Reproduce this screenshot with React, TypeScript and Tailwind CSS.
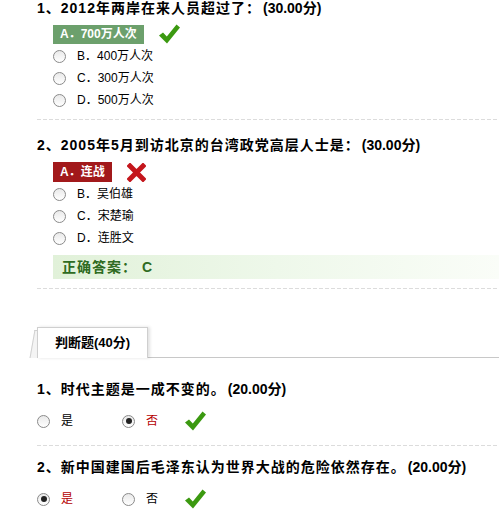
import React from 'react'

const font = { fontFamily: '"Liberation Sans", "Noto Sans CJK SC", sans-serif' }

function Radio({ checked = false }: { checked?: boolean }) {
  return (
    <span className="flex h-[13px] w-[13px] shrink-0 items-center justify-center rounded-full border border-[#8a8a8a] bg-gradient-to-b from-[#e9e9e9] to-white">
      {checked && <span className="h-[6px] w-[6px] rounded-full bg-[#222]" />}
    </span>
  )
}

function Check() {
  return (
    <svg width="21" height="20" viewBox="0 0 21 20" className="shrink-0">
      <path d="M0 11.5 L4 8.5 L7.8 12.5 L17.5 0.5 L21 3.5 L8 19.5 Z" fill="#3b9910" />
    </svg>
  )
}

function Cross() {
  return (
    <svg width="19" height="19" viewBox="0 0 19 19" className="shrink-0">
      <path d="M3 3 L16 16 M16 3 L3 16" stroke="#c4161c" strokeWidth="5" strokeLinecap="square" />
    </svg>
  )
}

function Dashed() {
  return <div className="h-px w-full bg-[repeating-linear-gradient(90deg,#dcdcdc_0_4px,transparent_4px_6px)]" />
}

function Option({ label, text }: { label: string; text: string }) {
  return (
    <div className="flex h-[22px] items-center gap-[11px] text-[12px] text-black">
      <Radio />
      <span>
        {label}．{text}
      </span>
    </div>
  )
}

function Title({ n, text, score }: { n: number; text: string; score: string }) {
  return (
    <div className="h-4 text-[14px] font-bold leading-4 text-black whitespace-nowrap">
      <span className="tracking-[1px]">
        {n}、{text}
      </span>
      <span className="ml-[2px]">({score}分)</span>
    </div>
  )
}

function TfOptions({ pick }: { pick: 'yes' | 'no' }) {
  return (
    <div className="flex h-[22px] items-center text-[12px]">
      <div className="flex w-[85px] items-center gap-[11px]">
        <Radio checked={pick === 'yes'} />
        <span className={pick === 'yes' ? 'text-[#b50000]' : 'text-black'}>是</span>
      </div>
      <div className="flex w-[63px] items-center gap-[11px]">
        <Radio checked={pick === 'no'} />
        <span className={pick === 'no' ? 'text-[#b50000]' : 'text-black'}>否</span>
      </div>
      <Check />
    </div>
  )
}

export default function App() {
  return (
    <div className="h-[519px] w-[499px] overflow-hidden bg-white" style={font}>
      <div className="pl-[37px]">
        {/* question 1 */}
        <Title n={1} text="2012年两岸在来人员超过了：" score="30.00" />
        <div className="mt-[7px] pl-4">
          <div className="flex h-[22px] items-center gap-[15px]">
            <span className="flex h-[19px] items-center bg-[#6ca06c] px-[7px] text-[12px] font-bold text-white">
              A．700万人次
            </span>
            <Check />
          </div>
          <Option label="B" text="400万人次" />
          <Option label="C" text="300万人次" />
          <Option label="D" text="500万人次" />
        </div>
        <div className="mt-2">
          <Dashed />
        </div>

        {/* question 2 */}
        <div className="mt-[17px]">
          <Title n={2} text="2005年5月到访北京的台湾政党高层人士是：" score="30.00" />
        </div>
        <div className="mt-2 pl-4">
          <div className="flex h-[22px] items-center gap-[15px]">
            <span className="flex h-5 items-center bg-[#a2191b] px-[7px] text-[12px] font-bold text-white">
              A．连战
            </span>
            <Cross />
          </div>
          <Option label="B" text="吴伯雄" />
          <Option label="C" text="宋楚瑜" />
          <Option label="D" text="连胜文" />
          <div className="mt-[6px] flex h-6 items-center bg-gradient-to-r from-[#e1f1d9] via-[#eef8ea] to-[#fafdf8] pl-[9px] text-[14px] font-bold tracking-[1px] text-[#2f6b22]">
            正确答案：&nbsp;C
          </div>
        </div>
        <div className="mt-[9px]">
          <Dashed />
        </div>
      </div>

      {/* tab bar */}
      <div className="mt-[38px] flex items-end">
        <div className="w-[37px]" />
        <div className="relative">
          <div className="absolute -left-[5px] top-[3px] h-[28px] w-[12px] -skew-x-[10deg] border-l border-t border-[#d0d0d0] bg-[#f4f4f4]" />
          <div className="relative z-10 flex h-[31px] w-[111px] items-center justify-center border border-b-0 border-[#cfcfcf] bg-white text-[13px] font-bold text-black shadow-[2px_0_3px_rgba(0,0,0,0.12)]">
            判断题(40分)
          </div>
        </div>
        <div className="h-px flex-1 bg-[#c8c8c8]" />
      </div>

      <div className="pl-[37px]">
        <div className="mt-[23px]">
          <Title n={1} text="时代主题是一成不变的。" score="20.00" />
        </div>
        <div className="mt-[13px]">
          <TfOptions pick="no" />
        </div>
        <div className="mt-[13px]">
          <Dashed />
        </div>
        <div className="mt-[13px]">
          <Title n={2} text="新中国建国后毛泽东认为世界大战的危险依然存在。" score="20.00" />
        </div>
        <div className="mt-[13px]">
          <TfOptions pick="yes" />
        </div>
      </div>
    </div>
  )
}
